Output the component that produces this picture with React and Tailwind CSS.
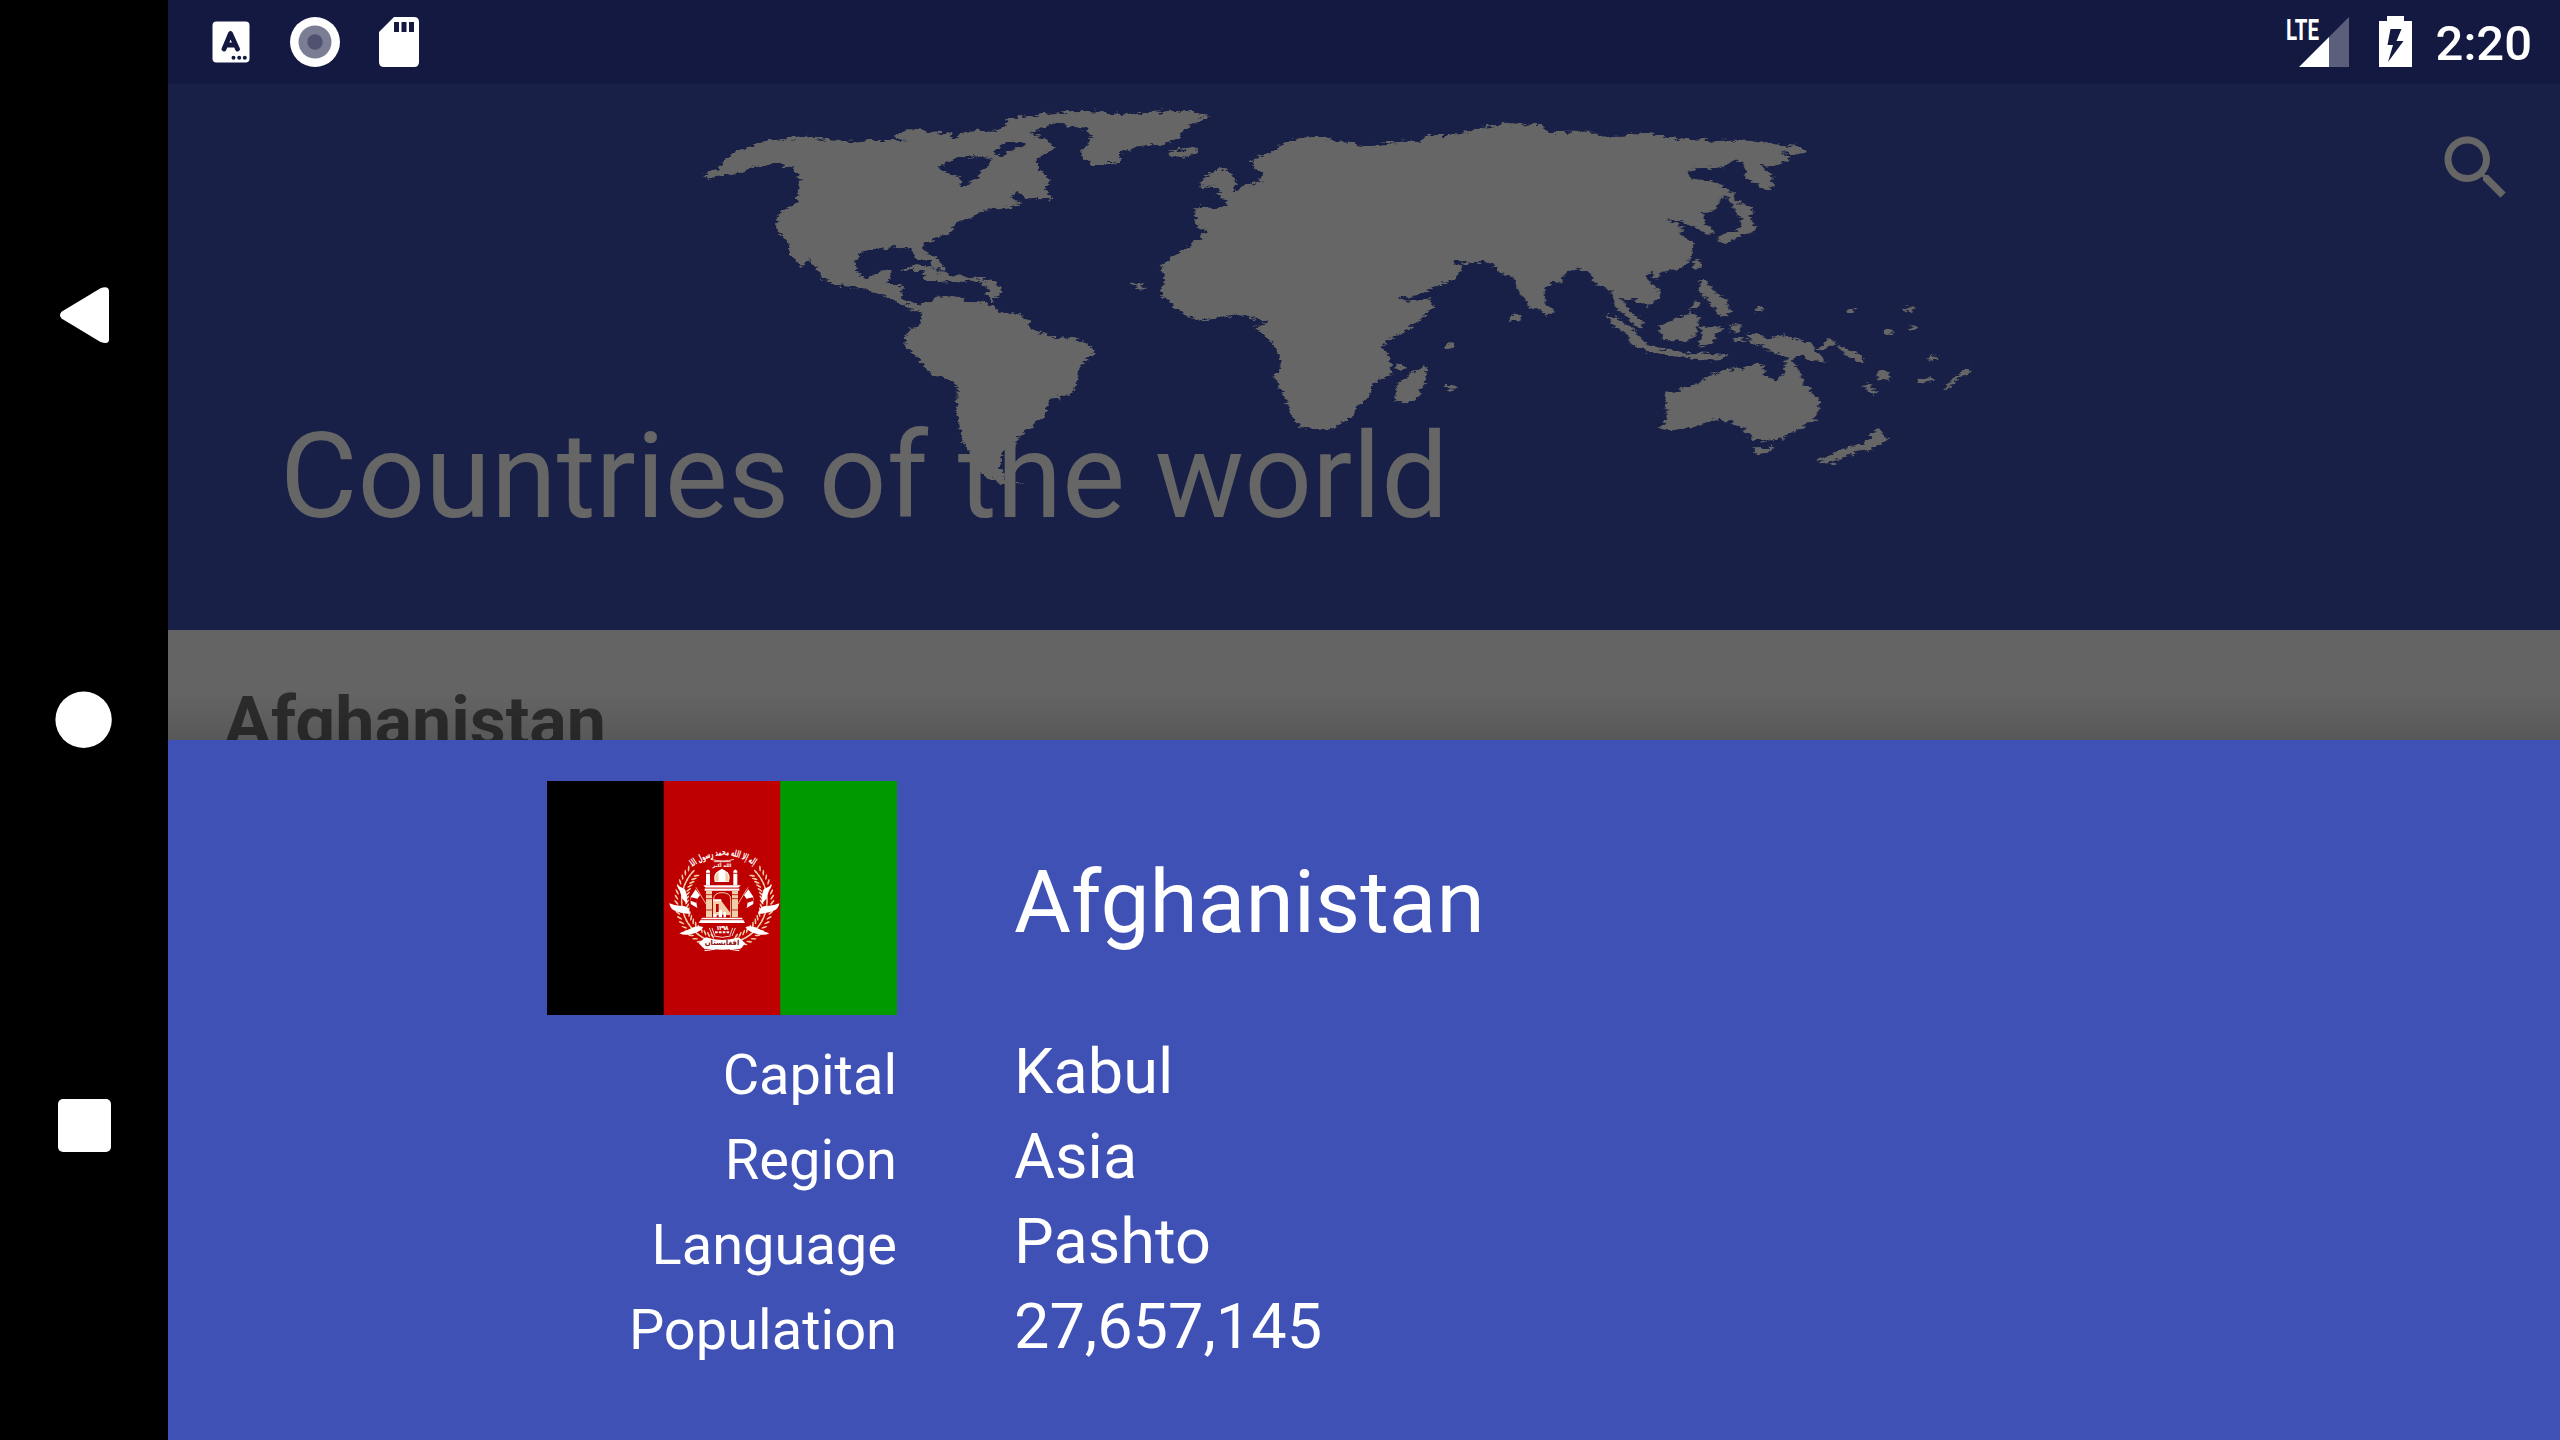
import React from "react";

const DETAILS = [
  { label: "Capital", value: "Kabul" },
  { label: "Region", value: "Asia" },
  { label: "Language", value: "Pashto" },
  { label: "Population", value: "27,657,145" },
];

function NavBar() {
  return (
    <nav className="flex h-[1440px] w-[168px] shrink-0 flex-col items-center bg-black pt-[285px] text-white">
      <svg className="h-[60px] w-[60px]" viewBox="0 0 60 60" fill="currentColor">
        <path d="M7.500 26.800L46.500 3.200Q55 0.500 55 6.500V54.500Q55 60 46.500 57L7.500 33.500Q4.500 30.200 7.500 26.800Z" />
      </svg>
      <svg className="mt-[345px] h-[60px] w-[60px]" viewBox="0 0 60 60" fill="currentColor">
        <circle cx="29.600" cy="29.700" r="28.200" />
      </svg>
      <svg className="mt-[346px] h-[60px] w-[60px]" viewBox="0 0 60 60" fill="currentColor">
        <rect x="4" y="3" width="53" height="53" rx="5" />
      </svg>
    </nav>
  );
}

function StatusBar() {
  return (
    <div className="flex h-[84px] items-start bg-[#131940] pr-[28px] pl-[44px] text-white">
      <svg className="mt-[21px] h-[42px] w-[38px]" viewBox="0 0 38 42">
        <rect x="0.500" y="0.500" width="37" height="41" rx="4" fill="#fff" />
        <path d="M12 28L18.500 12.500L25.500 28M14 24H23.500" fill="none" stroke="#131940" strokeWidth="4.800" strokeLinecap="round" strokeLinejoin="round" />
        <circle cx="21.500" cy="36.700" r="2" fill="#131940" />
        <circle cx="27.200" cy="36.700" r="2" fill="#131940" />
        <circle cx="32.800" cy="36.700" r="2" fill="#131940" />
      </svg>
      <svg className="mt-[17px] ml-[40px] h-[50px] w-[50px]" viewBox="0 0 50 50">
        <circle cx="25" cy="25" r="25" fill="#fff" />
        <circle cx="25" cy="25" r="16.500" fill="#7b7d94" />
        <circle cx="25" cy="25" r="7.700" fill="#4f5370" />
      </svg>
      <svg className="mt-[17px] ml-[39px] h-[50px] w-[40px]" viewBox="0 0 40 50">
        <path d="M15 0H35Q40 0 40 5V45Q40 50 35 50H5Q0 50 0 45V15Z" fill="#fff" />
        <path d="M15 5h5v10h-5zM22.500 5h5v10h-5zM30 5h5v10h-5z" fill="#131940" />
      </svg>
      <div className="grow" />
      <svg className="mt-[17px] h-[50px] w-[63px]" viewBox="0 0 63 50">
        <path d="M63 0V50H43V20Z" fill="#5c5f7b" />
        <path d="M43 20V50H13Z" fill="#fff" />
        <text x="0" y="22.700" textLength="33" lengthAdjust="spacingAndGlyphs" fill="#fff" fontFamily="Roboto" fontWeight="700" fontSize="30">LTE</text>
      </svg>
      <svg className="mt-[16px] ml-[30px] h-[51px] w-[33px]" viewBox="0 0 33 51">
        <path d="M8 0H25V5H33V51H0V5H8Z" fill="#fff" />
        <path d="M11.500 13H22.500L17.500 25H24.500L9 46L14 29H8.500Z" fill="#131940" />
      </svg>
      <div className="ml-[24px] text-[49px] leading-[84px] font-medium mt-[2px]">2:20</div>
    </div>
  );
}

function WorldMap() {
  return (
    <svg className="absolute top-[6px] left-[522px] h-[420px] w-[1320px]" viewBox="0 0 1320 420" fill="#666666">
      <defs>
        <filter id="coast" x="-2%" y="-5%" width="104%" height="110%">
          <feTurbulence type="fractalNoise" baseFrequency="0.12 0.3" numOctaves="3" seed="4" result="n" />
          <feDisplacementMap in="SourceGraphic" in2="n" scale="9" xChannelSelector="R" yChannelSelector="G" />
        </filter>
      </defs>
      <g filter="url(#coast)">
        {/* Americas */}
        <g transform="scale(0.33333)">
          <path fillRule="evenodd" d="M38 255L85 235 100 215 140 185 210 158 300 143 350 140 410 150 480 155 560 150 605 150 650 155 610 138 650 118 690 118 715 127 780 130 790 150 810 128 860 122 915 125 950 105 945 85 1000 80 1040 74 1100 68 1165 63 1200 63 1290 72V215L1260 222 1215 222 1180 205 1172 180 1205 150 1190 120 1160 112 1100 98 1060 110 1020 130 1065 145 1092 175 1060 195 1040 208 1045 240 1080 270 1065 295 1085 325 1050 328 1010 323 985 305 955 320 1000 340 930 358 890 355 850 380 800 395 780 430 740 445 700 465 700 485 740 500 765 540 725 535 720 512 680 510 665 480 625 470 560 478 510 490 495 520 500 550 530 565 560 550 580 540 610 545 590 580 635 590 635 620 650 638 700 640 720 640 745 620 790 618 830 632 880 635 910 650 940 668 990 672 1015 690 1025 720 1090 740 1160 745 1205 770 1215 790 1165 830 1165 870 1145 910 1080 930 1060 980 1020 1015 985 1040 970 1080 945 1080 930 1130 945 1170 1000 1185 930 1180 880 1160 850 1120 840 1085 815 1050 800 960 800 890 780 870 720 850 680 800 645 770 650 730 690 700 695 665 650 655 600 625 520 595 440 585 395 565 375 530 360 505 335 528 315 510 300 490 290 450 265 425 255 400 275 365 320 335 330 270 310 235 265 220 200 228 140 250 80 258 55 265ZM740 232L790 208 850 198 910 205 880 240 865 258 820 290 805 262 770 250ZM905 192L945 155 1000 155 1000 175 960 180 940 198Z" />
          <path d="M635 540L670 525 720 530 745 545 800 555 880 568 915 575 935 610 905 635 890 610 900 595 870 575 790 575 700 572 715 555 680 540Z" />
        </g>
        {/* Greenland, Europe, Africa, west Asia */}
        <g transform="translate(410 0) scale(0.33333)">
          <path d="M-30 70L60 78 150 65 255 63 335 78 290 95 240 130 235 150 190 162 120 170 50 190 10 222 -30 222Z" />
          <path d="M205 185L250 178 295 175 290 190 245 205 210 200Z" />
          <path d="M298 290L310 262 350 240 380 238 410 275 400 305 365 310 345 290 320 290Z" />
          <path d="M455 210L510 190 550 160 600 143 660 140 710 152 800 168 860 158 960 152 990 135 1060 135 1140 115 1230 97H1240V560L1220 550 1160 515 1100 520 1055 512 1085 540 1060 570 1000 595 950 615 895 625 920 635 990 628 1000 650 950 700 890 735 845 768 870 805 875 850 820 880 800 930 770 945 760 980 690 1018 600 1015 570 965 545 900 520 860 545 820 520 760 490 735 465 710 500 700 430 672 370 682 285 690 235 660 190 620 180 600 195 570 185 530 220 495 270 470 325 425 285 405 290 355 375 350 380 330 345 315 410 300 485 270 490 245 460 235Z" />
          <path d="M885 935L890 880 940 850 975 825 982 860 950 930 925 940Z" />
          <ellipse cx="900" cy="830" rx="14" ry="7" />
          <ellipse cx="1048" cy="768" rx="13" ry="8" />
          <ellipse cx="1055" cy="892" rx="15" ry="7" />
          <path d="M88 578L110 578 138 592 125 602 105 590Z" />
        </g>
        {/* East Asia and Oceania */}
        <g transform="translate(810 0) scale(0.33333)">
          <path d="M-10 102L120 105 140 125 280 125 310 140 370 140 390 130 440 130 530 145 640 152 770 152 840 165 900 172 918 185 900 195 840 185 875 205 830 225 780 228 815 255 820 295 790 298 735 260 730 215 690 215 670 232 590 235 560 245 570 265 640 275 690 300 715 335 765 360 745 380 770 410 760 430 700 445 670 465 650 440 690 425 725 410 720 380 700 350 680 320 665 320 645 360 605 368 610 395 645 430 620 435 590 410 550 395 500 390 550 410 540 430 580 460 575 500 555 530 490 545 470 570 450 545 435 560 475 600 480 630 440 648 400 630 360 620 385 660 425 690 430 715 410 715 380 680 345 650 335 600 300 590 270 550 235 538 205 545 180 570 140 590 130 640 165 665 140 675 115 655 90 655 60 610 40 560 -10 545Z" />
          <path d="M315 675L350 680 400 720 430 750 450 770 560 788 690 795 650 812 540 802 440 785 395 760 370 725 335 700Z" />
          <path d="M475 710L530 685 575 665 598 685 585 740 545 757 490 750Z" />
          <path d="M600 705L620 712 680 712 645 735 640 760 595 770 605 740Z" />
          <path d="M600 570L622 570 640 605 680 630 692 665 665 682 630 640 598 600Z" />
          <path d="M565 660L585 635 608 632 595 650Z" />
          <ellipse cx="592" cy="522" rx="13" ry="15" />
          <path d="M690 705L725 702 715 725 695 728Z" />
          <ellipse cx="718" cy="750" rx="20" ry="6" />
          <path d="M740 730L800 742 850 736 930 760 945 780 980 818 930 812 900 795 870 808 820 785 750 752Z" />
          <path d="M945 775L970 762 985 740 1003 760 970 782Z" />
          <path d="M1005 762L1070 788 1097 818 1050 808Z" />
          <path d="M475 1015L500 990 495 910 590 885 650 845 720 835 760 822 795 828 790 855 825 868 855 850 850 830 865 800 880 805 895 840 910 880 960 935 950 985 900 1015 850 1045 800 1055 750 1045 735 1020 690 995 640 990 580 1010 510 1022Z" />
          <path d="M760 1072L820 1070 805 1092 768 1095Z" />
          <path d="M950 1112L1000 1088 1095 1055 1130 1015 1168 1042 1130 1072 1080 1082 1000 1117 965 1122Z" />
          <ellipse cx="45" cy="683" rx="18" ry="12" />
          <ellipse cx="1152" cy="857" rx="20" ry="14" />
          <path d="M1083 882L1105 885 1135 912 1120 918Z" />
          <path d="M1250 875L1270 862 1300 862 1300 872 1262 882Z" />
          <path d="M1330 900L1355 872 1390 840 1414 832 1405 850 1370 870 1350 895Z" />
          <ellipse cx="778" cy="660" rx="14" ry="8" />
          <ellipse cx="1055" cy="662" rx="13" ry="6" />
          <ellipse cx="1225" cy="658" rx="14" ry="6" />
          <ellipse cx="1240" cy="713" rx="13" ry="7" />
          <ellipse cx="1165" cy="724" rx="13" ry="7" />
          <ellipse cx="1302" cy="804" rx="15" ry="7" />
        </g>
      </g>
    </svg>
  );
}

function Wreath() {
  const leaves = [];
  for (let i = 0; i < 19; i++) {
    const deg = 222 - i * 6.3;
    const a = (deg * Math.PI) / 180;
    [112, 128, 144].forEach((r, k) => {
      leaves.push(
        <ellipse
          key={i + "-" + k}
          cx={193 + r * Math.cos(a)}
          cy={212 + r * Math.sin(a)}
          rx="9"
          ry="2.600"
          transform={`rotate(${deg + 90 + (k - 1) * -38} ${193 + r * Math.cos(a)} ${212 + r * Math.sin(a)})`}
        />
      );
    });
  }
  return (
    <g>
      <g fill="#f0cfa8">{leaves}</g>
      <g fill="#fff">
        <path d="M50 165L75 178Q84 200 80 222L66 205Q60 180 50 165Z" />
        <path d="M28 220Q50 230 72 228Q90 232 90 252Q60 250 40 240Q30 234 28 220Z" />
        <path d="M58 310Q80 302 100 292Q118 286 130 292Q118 308 95 312Q72 318 58 310Z" />
      </g>
    </g>
  );
}

function Emblem() {
  return (
    <g transform="translate(113 49) scale(0.33333)">
      <defs>
        <path id="creed" d="M96 112Q190 40 290 112" />
      </defs>
      <Wreath />
      <g transform="translate(386 0) scale(-1 1)"><Wreath /></g>
      <text fill="#fff" fontFamily="DejaVu Sans" fontWeight="700" fontSize="29" direction="rtl" textAnchor="middle">
        <textPath href="#creed" startOffset="50%" textLength="225" lengthAdjust="spacingAndGlyphs">لا إله إلا الله محمد رسول الله</textPath>
      </text>
      <path d="M152 88Q190 98 222 88M162 95H212" fill="none" stroke="#fff" strokeWidth="2.500" />
      <text x="186" y="111" fill="#fff" fontFamily="DejaVu Sans" fontWeight="700" fontSize="14" textAnchor="middle">الله أكبر</text>
      {/* Mosque */}
      <g fill="#fff">
        <path d="M138 123Q144 114 150 123V166H138ZM220 123Q226 114 232 123V166H220Z" />
        <path d="M164 156Q158 130 176 122L186 116 196 122Q214 130 207 156Z" />
        <path d="M130 166H242L235 174H137Z" />
        <path d="M134 175H238V182H134Z" />
        <path d="M126 263H246L255 279H116Z" />
      </g>
      <path d="M166 154Q162 132 176 126V154ZM206 154Q208 132 196 126V154Z" fill="#f0cfa8" />
      <path d="M138 183H156V262H138ZM216 183H234V262H216Z" fill="#f0cfa8" />
      <path d="M138 194H156M138 206H156M138 240H156M216 194H234M216 206H234M216 240H234M136 130H152M218 130H234M130 174H242M122 269H250" stroke="#bf0000" strokeWidth="2.500" />
      <path d="M161 262V208Q161 188 186 188Q212 188 212 208V262" fill="none" stroke="#f0cfa8" strokeWidth="3" />
      <path d="M159 210H182L212 250V256H159Z" fill="#f0cfa8" />
      <path d="M160 208H184V214H160ZM176 240H186V262H176ZM190 246H198V262H190ZM160 252H170V262H160Z" fill="#fff" />
      <path d="M168 222H176V246H168ZM186 254H190V262H186ZM200 256H206V262H200Z" fill="#bf0000" />
      {/* Side flags */}
      <g fill="none" stroke="#f0cfa8" strokeWidth="2.500">
        <path d="M108 172L138 222M264 172L234 222" />
      </g>
      <path d="M107 178L120 196 108 212 112 234 92 222 92 200ZM265 178L252 196 264 212 260 234 280 222 280 200Z" fill="#fff" />
      <path d="M94 202L112 206 108 218 92 212ZM278 202L260 206 264 218 280 212Z" fill="#bf0000" />
      {/* Year and scroll */}
      <text x="187" y="299" fill="#fff" fontFamily="DejaVu Sans" fontWeight="700" fontSize="19" textLength="38" textAnchor="middle">١٢٩٨</text>
      <path d="M165 307H208" stroke="#fff" strokeWidth="6" strokeDasharray="8 3.500" />
      <path d="M148 294L158 318M156 294L164 316M226 294L216 318M218 294L210 316M162 318Q186 326 212 318" stroke="#fff" strokeWidth="2.500" fill="none" />
      <path d="M116 340Q128 328 138 322Q186 338 236 322L256 340 244 354Q186 364 130 354Z" fill="#fff" />
      <path d="M132 356H162M134 362L164 358M210 358L238 362M212 356H242" stroke="#fff" strokeWidth="3" />
      <text x="186" y="346" fill="#8a0c0c" fontFamily="DejaVu Sans" fontWeight="700" fontSize="21" textLength="104" lengthAdjust="spacingAndGlyphs" textAnchor="middle">افغانستان</text>
    </g>
  );
}

function Flag() {
  return (
    <svg className="h-[234px] w-[350px]" viewBox="0 0 350 234">
      <rect width="117" height="234" fill="#000000" />
      <rect x="116.700" width="117" height="234" fill="#bf0000" />
      <rect x="233.300" width="116.700" height="234" fill="#009900" />
      <Emblem />
    </svg>
  );
}

function Header() {
  return (
    <header className="relative h-[546px] bg-[#192047] text-[#666666]">
      <WorldMap />
      <div className="relative flex h-full flex-col">
        <div className="flex justify-end pt-[42px] pr-[42px]">
          <svg className="h-[84px] w-[84px]" viewBox="0 0 24 24" fill="currentColor">
            <path d="M15.500 14h-.79l-.28-.27C15.410 12.590 16 11.110 16 9.500 16 5.910 13.090 3 9.500 3S3 5.910 3 9.500 5.910 16 9.500 16c1.610 0 3.090-.59 4.230-1.570l.27.28v.79l5 4.990L20.490 19l-4.990-5zm-6 0C7.010 14 5 11.990 5 9.500S7.010 5 9.500 5 14 7.010 14 9.500 11.990 14 9.500 14z" />
          </svg>
        </div>
        <h1 className="mt-[197px] pl-[112px] text-[119px] leading-[140px]">Countries of the world</h1>
      </div>
    </header>
  );
}

function DetailSheet() {
  return (
    <section className="h-[700px] bg-[#3f51b5] pt-[41px] text-white">
      <div className="flex h-[234px] items-center pl-[379px]">
        <Flag />
        <h2 className="ml-[117px] pt-[8px] text-[87.5px] leading-[104px]">Afghanistan</h2>
      </div>
      <dl className="mt-[14px]">
        {DETAILS.map((d) => (
          <div key={d.label} className="flex h-[85px]">
            <dt className="w-[729px] pt-[4px] text-right text-[56px] leading-[85px]">{d.label}</dt>
            <dd className="ml-[117px] text-[63px] leading-[85px]">{d.value}</dd>
          </div>
        ))}
      </dl>
    </section>
  );
}

export default function App() {
  return (
    <div className="flex h-[1440px] w-[2560px] overflow-hidden bg-black font-[Roboto,sans-serif]">
      <NavBar />
      <main className="flex w-[2392px] flex-col">
        <StatusBar />
        <Header />
        <div className="relative h-[110px] overflow-hidden bg-[#646464]">
          <div className="pt-[52px] pl-[56px] text-[70px] leading-[80px] font-bold text-[#2c2c2c]">Afghanistan</div>
          <div className="absolute inset-x-0 bottom-0 h-[48px] bg-gradient-to-b from-black/0 to-black/12" />
        </div>
        <DetailSheet />
      </main>
    </div>
  );
}
